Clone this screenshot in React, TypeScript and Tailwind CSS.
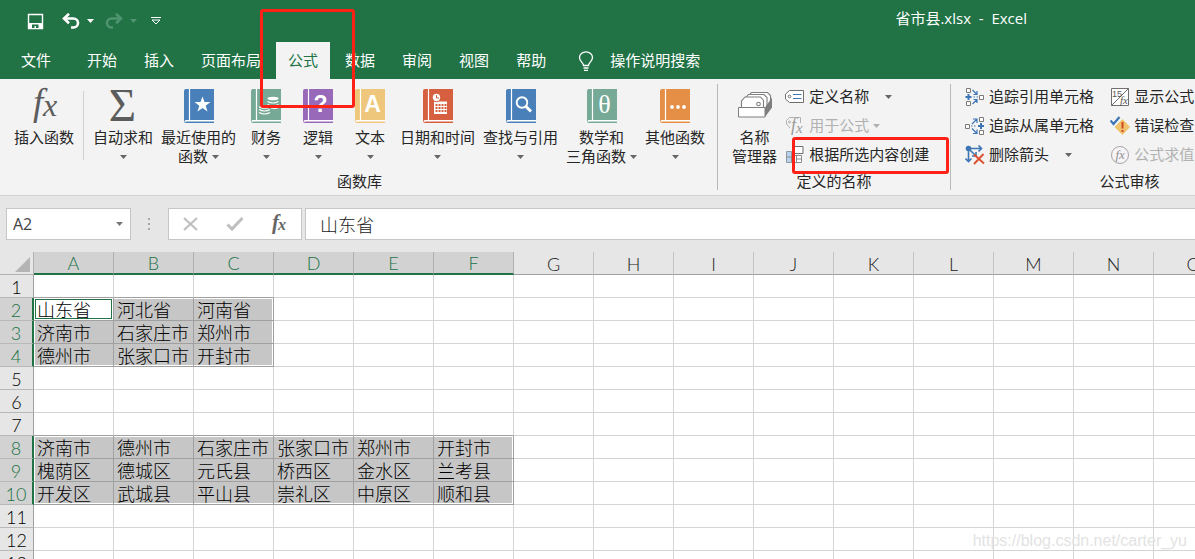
import { useState, type ReactNode } from 'react';
import clsx from 'clsx';

const COLUMNS = ['A', 'B', 'C', 'D', 'E', 'F', 'G', 'H', 'I', 'J', 'K', 'L', 'M', 'N', 'O'];
const ROW_COUNT = 13;

const SHEET: Record<number, string[]> = {
  2: ['山东省', '河北省', '河南省'],
  3: ['济南市', '石家庄市', '郑州市'],
  4: ['德州市', '张家口市', '开封市'],
  8: ['济南市', '德州市', '石家庄市', '张家口市', '郑州市', '开封市'],
  9: ['槐荫区', '德城区', '元氏县', '桥西区', '金水区', '兰考县'],
  10: ['开发区', '武城县', '平山县', '崇礼区', '中原区', '顺和县'],
};

interface Range {
  top: number;
  bottom: number;
  right: number;
}

// Both ranges start in column A
const SELECTION: Range[] = [
  { top: 2, bottom: 4, right: 2 },
  { top: 8, bottom: 10, right: 5 },
];

const TABS = ['开始', '插入', '页面布局', '公式', '数据', '审阅', '视图', '帮助'];

const rangeAt = (row: number, col: number) =>
  SELECTION.find((r) => row >= r.top && row <= r.bottom && col <= r.right);

const isRowSelected = (row: number) => SELECTION.some((r) => row >= r.top && row <= r.bottom);

function Caret({ className }: { className?: string }) {
  return (
    <svg width="7" height="4" viewBox="0 0 7 4" className={clsx('inline-block shrink-0', className)} aria-hidden="true">
      <path d="M0 0h7L3.5 4z" fill="currentColor" />
    </svg>
  );
}

function Book({ color, children }: { color: string; children: ReactNode }) {
  return (
    <svg width="30" height="34" viewBox="0 0 30 34" aria-hidden="true">
      <path d="M2 0H30V34H2Q0 34 0 32V2Q0 0 2 0z" fill={color} />
      <path d="M5.5 0V31" stroke="#fff" strokeWidth="1.2" />
      <path d="M30 31.8H2.5Q1.5 31.8 1 32.6" stroke="#fff" strokeWidth="1.6" fill="none" />
      {children}
    </svg>
  );
}

function StarBook() {
  return (
    <Book color="#4a80b9">
      <path d="M18.5 7.5l2 5.6h6l-4.8 3.6 1.8 5.8-5-3.5-5 3.5 1.8-5.8-4.8-3.6h6z" fill="#fff" />
    </Book>
  );
}

function CoinsBook() {
  return (
    <Book color="#77a997">
      <g fill="#fff">
        <ellipse cx="22" cy="9.5" rx="5.5" ry="1.8" />
        <ellipse cx="13.5" cy="18" rx="5.5" ry="1.8" />
      </g>
      <g fill="none" stroke="#fff" strokeWidth="1.2">
        <path d="M16.5 12.5q5.5 3 11 0M16.5 15.5q5.5 3 11 0M20 19q4.5 1 7.5-.5" />
        <path d="M8 20.5q5.5 3 11 0M8 23.5q5.5 3 11 0" />
      </g>
    </Book>
  );
}

function LetterBook({ color, letter, serif }: { color: string; letter: string; serif?: boolean }) {
  return (
    <Book color={color}>
      <text
        x="17.5"
        y={serif ? 24 : 23}
        textAnchor="middle"
        fill="#fff"
        fontSize={serif ? 26 : 23}
        fontWeight={serif ? 400 : 700}
        fontFamily={serif ? 'Liberation Serif, serif' : 'Liberation Sans, sans-serif'}
      >
        {letter}
      </text>
    </Book>
  );
}

function CalendarBook() {
  return (
    <Book color="#d65f40">
      <path d="M11 12.5h13V25H11z" fill="#fff" />
      <g fill="#d65f40">
        {[15, 18, 21].map((y) =>
          [12.5, 15.5, 18.5, 21.5].map((x) => <rect key={`${x}-${y}`} x={x} y={y} width="2" height="2" />),
        )}
      </g>
      <circle cx="13.5" cy="8.5" r="4.2" fill="#fff" stroke="#d65f40" strokeWidth="1" />
      <path d="M13.5 6v3h2.5" stroke="#d65f40" fill="none" />
    </Book>
  );
}

function SearchBook() {
  return (
    <Book color="#4a80b9">
      <circle cx="16" cy="13.5" r="5.3" fill="none" stroke="#fff" strokeWidth="1.9" />
      <path d="M19.5 17l5.5 5.5" stroke="#fff" strokeWidth="3" />
    </Book>
  );
}

function DotsBook() {
  return (
    <Book color="#e58e45">
      <g fill="#fff">
        <circle cx="12" cy="18" r="1.9" />
        <circle cx="18" cy="18" r="1.9" />
        <circle cx="24" cy="18" r="1.9" />
      </g>
    </Book>
  );
}

function FxIcon() {
  return (
    <svg
      width="30"
      height="34"
      viewBox="0 0 30 34"
      fill="#5c5c5c"
      fontStyle="italic"
      fontFamily="Liberation Serif, serif"
      className="overflow-visible"
      aria-hidden="true"
    >
      <text x="4" y="26" fontSize="37">
        f
      </text>
      <text x="14" y="27" fontSize="32">
        x
      </text>
    </svg>
  );
}

function SigmaIcon() {
  return (
    <svg width="30" height="34" viewBox="0 0 30 34" className="overflow-visible" aria-hidden="true">
      <text
        x="14.5"
        y="32"
        textAnchor="middle"
        fill="#5c5c5c"
        fontSize="47"
        fontFamily="Liberation Serif, serif"
      >
        Σ
      </text>
    </svg>
  );
}

function NameManagerIcon() {
  return (
    <svg width="34" height="34" viewBox="0 0 34 34" aria-hidden="true">
      <g fill="#fff" stroke="#7f7f7f" strokeWidth="1.1">
        <path d="M10.5 17V7l3-3.5h16l3 3v13" />
        <path d="M7.5 18V9l3-3.5H26l3 3V19" />
        <path d="M3.5 19v-7L7 8h15.5l3 3.5V19" />
        <circle cx="20.5" cy="15" r="1.8" />
      </g>
      <path d="M27 18.5L34 8.5V18.5L27 28z" fill="#7f7f7f" />
      <path d="M.5 18.5H27V28H.5z" fill="#fff" stroke="#7f7f7f" />
    </svg>
  );
}

function TagIcon() {
  return (
    <svg width="20" height="20" viewBox="0 0 20 20" aria-hidden="true">
      <path d="M4.5 3.5h14v12h-14L.5 12V7z" fill="#fff" stroke="#6f6f6f" />
      <circle cx="4.5" cy="9.5" r="1.3" fill="none" stroke="#6f6f6f" />
      <path d="M8 7.5h8.5M8 11.5h8.5" stroke="#3e75b5" strokeWidth="1.2" />
    </svg>
  );
}

function UseInFormulaIcon() {
  return (
    <svg
      width="20"
      height="20"
      viewBox="0 0 20 20"
      fontStyle="italic"
      fontFamily="Liberation Serif, serif"
      fill="#9b9b9b"
      className="overflow-visible"
      aria-hidden="true"
    >
      <path d="M5 12L1.5 8V4.5l3-3h11V7" fill="none" stroke="#b1b1b1" />
      <circle cx="4.5" cy="6" r="1" fill="none" stroke="#b1b1b1" />
      <text x="6" y="15" fontSize="18">
        f
      </text>
      <text x="11" y="17" fontSize="15">
        x
      </text>
    </svg>
  );
}

function CreateFromSelectionIcon() {
  return (
    <svg width="20" height="20" viewBox="0 0 20 20" aria-hidden="true">
      <path d="M1.5 6.5h5v11h-5z" fill="#b9d2eb" stroke="#8f9aa5" />
      <path d="M6.5 10.5h10v7h-10zM11.5 11v6" fill="#fff" stroke="#8c8c8c" />
      <path d="M1 12h5.5M11 14h5.5" stroke="#8c8c8c" />
      <path d="M9.5 1.5H18v7H9.5L7.5 6V3.5z" fill="#fff" stroke="#6f6f6f" />
    </svg>
  );
}

function TracePrecedentsIcon() {
  return (
    <svg width="20" height="20" viewBox="0 0 20 20" aria-hidden="true">
      <g fill="#fff" stroke="#7a7a7a">
        <path d="M1.5 1.5h4v4h-4zM1.5 14.5h4v4h-4zM14.5 8.5h4v4h-4z" />
      </g>
      <g stroke="#3e75b5" fill="none">
        <path d="M.5 10h6M3.5 7v6" strokeWidth="2" />
        <path d="M7.5 3l4 4M12 4v3.5H8.5M7.5 17l4-4M12 16v-3.5H8.5M8.5 10H10M11.5 10H13" strokeWidth="1.2" />
      </g>
    </svg>
  );
}

function TraceDependentsIcon() {
  return (
    <svg width="20" height="20" viewBox="0 0 20 20" aria-hidden="true">
      <g fill="#fff" stroke="#7a7a7a">
        <path d="M14.5 1.5h4v4h-4zM14.5 14.5h4v4h-4zM.5 8.5h4v4h-4z" />
      </g>
      <g stroke="#3e75b5" fill="none">
        <path d="M13 10h6M16 7v6" strokeWidth="2" />
        <path d="M7 8l4.5-4.5M8 3h4v4M7 12.5l4.5 4.5M8 17.500h4v-4M6 10h1.5M9 10h1.5" strokeWidth="1.2" />
      </g>
    </svg>
  );
}

function RemoveArrowsIcon() {
  return (
    <svg width="20" height="20" viewBox="0 0 20 20" aria-hidden="true">
      <circle cx="3.5" cy="3.5" r="2.8" fill="#3e75b5" />
      <g stroke="#3e75b5" fill="none" strokeWidth="1.6">
        <path d="M5 3.5h11M13.5.5l3 3-3 3M3.5 5v11M.5 13.5l3 3 3-3" />
        <path d="M5 5l6 6M11 7v4H7" />
      </g>
      <path d="M9 9.5l10 9M18.5 9L9 19" stroke="#dc5230" strokeWidth="1.9" />
    </svg>
  );
}

function ShowFormulasIcon() {
  return (
    <svg width="20" height="20" viewBox="0 0 20 20" aria-hidden="true">
      <path d="M1.5 1.5h17v17h-17z" fill="#fff" stroke="#6f6f6f" />
      <path d="M1.5 18.5l17-17" stroke="#6f6f6f" />
      <text x="2" y="9.5" fill="#555" fontSize="9" fontFamily="Liberation Sans, sans-serif">
        15
      </text>
      <text x="10" y="16.5" fill="#555" fontSize="11" fontStyle="italic" fontFamily="Liberation Serif, serif">
        fx
      </text>
    </svg>
  );
}

function ErrorCheckIcon() {
  return (
    <svg width="20" height="20" viewBox="0 0 20 20" aria-hidden="true">
      <path d="M12.5 3.5l7 7.5-7 7.5L5 11z" fill="#f0c36f" stroke="#f0c36f" strokeLinejoin="round" />
      <path d="M12.5 6v6.5M12.5 14v2" stroke="#d24a20" strokeWidth="2" />
      <path d="M.5 4.5L3.5 8l6-7" stroke="#3e75b5" strokeWidth="2.2" fill="none" />
    </svg>
  );
}

function EvaluateIcon() {
  return (
    <svg width="20" height="20" viewBox="0 0 20 20" aria-hidden="true">
      <circle cx="10" cy="10" r="8.5" fill="#f7f4f7" stroke="#a8a3a8" />
      <text x="5.5" y="14" fill="#8f8f8f" fontSize="13" fontStyle="italic" fontFamily="Liberation Serif, serif">
        fx
      </text>
    </svg>
  );
}

interface BigButtonProps {
  icon: ReactNode;
  lines: string[];
  // where the drop-down caret goes: under the label, after its last line, or nowhere
  caret?: 'below' | 'inline';
}

function BigButton({ icon, lines, caret }: BigButtonProps) {
  return (
    <button type="button" className="flex min-w-[52px] shrink-0 flex-col items-center px-1 leading-[19px] hover:bg-[#d2d2d2]">
      <span className="mb-[5px] flex h-[39px] items-end">{icon}</span>
      {lines.map((line, i) => (
        <span key={line} className="flex items-center gap-1 whitespace-nowrap">
          {line}
          {caret === 'inline' && i === lines.length - 1 && <Caret className="text-[#666]" />}
        </span>
      ))}
      {caret === 'below' && (
        <span className="flex h-[19px] items-center">
          <Caret className="text-[#666]" />
        </span>
      )}
    </button>
  );
}

interface SmallButtonProps {
  icon: ReactNode;
  label: string;
  disabled?: boolean;
  caret?: 'near' | 'far';
}

function SmallButton({ icon, label, disabled, caret }: SmallButtonProps) {
  return (
    <button
      type="button"
      disabled={disabled}
      className={clsx(
        'flex h-[29px] items-center pb-1 whitespace-nowrap',
        disabled ? 'text-[#b1b1b1]' : 'hover:bg-[#d2d2d2]',
      )}
    >
      <span className="mr-1">{icon}</span>
      {label}
      {caret && (
        <Caret className={clsx(caret === 'far' ? 'ml-4' : 'ml-1', disabled ? 'text-[#b1b1b1]' : 'text-[#666]')} />
      )}
    </button>
  );
}

interface RibbonGroupProps {
  label: string;
  className?: string;
  children: ReactNode;
}

function RibbonGroup({ label, className, children }: RibbonGroupProps) {
  return (
    <section aria-label={label} className={clsx('flex shrink-0 flex-col border-r border-[#b9b9b9]', className)}>
      <div className="flex h-[90px] items-start">{children}</div>
      <div className="text-center leading-[17px]">{label}</div>
    </section>
  );
}

function TitleBar() {
  return (
    <div className="flex h-[42px] items-center">
      <div className="flex h-[38px] flex-1 items-center pl-[27px]">
        <button type="button" aria-label="保存">
          <svg width="17" height="17" viewBox="0 0 17 17">
            <path d="M1.5 1.5h14v14h-14z" fill="none" stroke="#fff" strokeWidth="1.4" />
            <path d="M1 10h15v6H1z" fill="#fff" />
            <path d="M5 11.5h6.5V15H9v-2H7.500v2H5z" fill="#217346" />
          </svg>
        </button>
        <button type="button" aria-label="撤消" className="ml-[18px] flex items-center gap-[7px] text-white">
          <svg width="18" height="16" viewBox="0 0 18 16" fill="none" stroke="currentColor">
            <path d="M2 5.5h9.5a4.5 4.5 0 0 1 0 9H9" strokeWidth="2.6" />
            <path d="M7 .8L2 5.5l5 4.7" strokeWidth="2.6" />
          </svg>
          <Caret />
        </button>
        <button type="button" aria-label="恢复" disabled className="ml-[11px] flex items-center gap-[7px] text-[#4f9470]">
          <svg width="18" height="16" viewBox="0 0 18 16" fill="none" stroke="currentColor">
            <path d="M16 5.5H6.5a4.5 4.5 0 0 0 0 9H8" strokeWidth="2.6" />
            <path d="M11 .8l5 4.7-5 4.7" strokeWidth="2.6" />
          </svg>
          <Caret />
        </button>
        <button type="button" aria-label="自定义快速访问工具栏" className="ml-[14px]">
          <svg width="10" height="8" viewBox="0 0 10 8" fill="none" stroke="#fff">
            <path d="M0 .5h10M1 3h8L5 7z" />
          </svg>
        </button>
      </div>
      <h1 className="mr-[168px] h-[28px] whitespace-pre text-[15px] text-white">省市县.xlsx  -  Excel</h1>
    </div>
  );
}

function TabBar({ active, onSelect }: { active: string; onSelect: (tab: string) => void }) {
  return (
    <nav className="flex h-[37px] items-stretch pl-[9px] text-white">
      <button type="button" className="mr-3 px-3">
        文件
      </button>
      <div className="flex gap-[3px]">
        {TABS.map((tab) => (
          <button
            key={tab}
            type="button"
            onClick={() => onSelect(tab)}
            className={clsx('px-3 whitespace-nowrap', tab === active && 'bg-[#f3f3f3] text-[#217346]')}
          >
            {tab}
          </button>
        ))}
      </div>
      <button type="button" className="ml-5 flex items-center gap-4 whitespace-nowrap">
        <svg width="16" height="20" viewBox="0 0 16 20" fill="none" stroke="#fff" strokeWidth="1.3">
          <path d="M5.5 14.5c0-3-4-4-4-8a6.5 5.7 0 0 1 13 0c0 4-4 5-4 8z" />
          <path d="M5.5 17h5M6 19.3h4" />
        </svg>
        操作说明搜索
      </button>
    </nav>
  );
}

function Ribbon() {
  return (
    <div className="flex h-[117px] overflow-hidden border-b border-[#d2d2d2] bg-[#f3f3f3] pt-[5px] pb-[5px] text-[#262626]">
      <RibbonGroup label="函数库" className="pr-2 pl-[10px]">
        <BigButton icon={<FxIcon />} lines={['插入函数']} />
        <div className="mx-[5px] mt-[7px] h-[69px] w-px bg-[#d0d0d0]" />
        <BigButton icon={<SigmaIcon />} lines={['自动求和']} caret="below" />
        <BigButton icon={<StarBook />} lines={['最近使用的', '函数']} caret="inline" />
        <BigButton icon={<CoinsBook />} lines={['财务']} caret="below" />
        <BigButton icon={<LetterBook color="#9868b9" letter="?" />} lines={['逻辑']} caret="below" />
        <BigButton icon={<LetterBook color="#eec77c" letter="A" />} lines={['文本']} caret="below" />
        <BigButton icon={<CalendarBook />} lines={['日期和时间']} caret="below" />
        <BigButton icon={<SearchBook />} lines={['查找与引用']} caret="below" />
        <BigButton icon={<LetterBook color="#77a997" letter="θ" serif />} lines={['数学和', '三角函数']} caret="inline" />
        <BigButton icon={<DotsBook />} lines={['其他函数']} caret="below" />
      </RibbonGroup>
      <RibbonGroup label="定义的名称" className="w-[233px]">
        <div className="ml-[10px]">
          <BigButton icon={<NameManagerIcon />} lines={['名称', '管理器']} />
        </div>
        <div className="ml-1">
          <SmallButton icon={<TagIcon />} label="定义名称" caret="far" />
          <SmallButton icon={<UseInFormulaIcon />} label="用于公式" caret="near" disabled />
          <SmallButton icon={<CreateFromSelectionIcon />} label="根据所选内容创建" />
        </div>
      </RibbonGroup>
      <RibbonGroup label="公式审核" className="w-[358px]">
        <div className="ml-[14px]">
          <SmallButton icon={<TracePrecedentsIcon />} label="追踪引用单元格" />
          <SmallButton icon={<TraceDependentsIcon />} label="追踪从属单元格" />
          <SmallButton icon={<RemoveArrowsIcon />} label="删除箭头" caret="far" />
        </div>
        <div className="ml-4">
          <SmallButton icon={<ShowFormulasIcon />} label="显示公式" />
          <SmallButton icon={<ErrorCheckIcon />} label="错误检查" />
          <SmallButton icon={<EvaluateIcon />} label="公式求值" disabled />
        </div>
      </RibbonGroup>
    </div>
  );
}

function FormulaBar() {
  return (
    <div className="flex h-[56px] items-center bg-[#e6e6e6] pl-[6px]">
      <div className="flex h-[32px] w-[125px] items-center border border-[#c6c6c6] bg-white pr-[7px]">
        <input
          aria-label="名称框"
          defaultValue="A2"
          className="w-full min-w-0 bg-transparent pl-[6px] text-base text-[#444] outline-none"
        />
        <button type="button" aria-label="选择名称" className="flex">
          <Caret className="text-[#777]" />
        </button>
      </div>
      <svg width="3" height="14" viewBox="0 0 3 14" fill="#a6a6a6" className="mx-[17px]" aria-hidden="true">
        <path d="M0 1h2v2H0zM0 6h2v2H0zM0 11h2v2H0z" />
      </svg>
      <div className="flex h-[32px] w-[134px] items-center justify-between border border-[#c6c6c6] bg-white px-[13px]">
        <button type="button" aria-label="取消">
          <svg width="17" height="16" viewBox="0 0 17 16" fill="none" stroke="#bfbfbf" strokeWidth="2.2">
            <path d="M2 2l13 12M15 2L2 14" />
          </svg>
        </button>
        <button type="button" aria-label="输入">
          <svg width="18" height="16" viewBox="0 0 18 16" fill="none" stroke="#bfbfbf" strokeWidth="3">
            <path d="M1.5 8.5L6 13 16.5 2" />
          </svg>
        </button>
        <button type="button" aria-label="插入函数">
          <svg
            width="18"
            height="22"
            viewBox="0 0 18 22"
            fill="#666"
            fontFamily="Liberation Serif, serif"
            fontStyle="italic"
            fontWeight="700"
            className="overflow-visible"
          >
            <text x="2" y="16" fontSize="21">
              f
            </text>
            <text x="8" y="17" fontSize="16">
              x
            </text>
          </svg>
        </button>
      </div>
      <input
        aria-label="编辑栏"
        defaultValue="山东省"
        className="ml-[3px] h-[32px] min-w-0 flex-1 border border-r-0 border-[#c6c6c6] bg-white px-[14px] font-['Lato','Noto_Sans_CJK_SC',sans-serif] text-[18px] font-light text-[#222] outline-none"
      />
    </div>
  );
}

function Cell({ row, col }: { row: number; col: number }) {
  const range = rangeAt(row, col);
  const below = rangeAt(row + 1, col);
  const isActive = row === 2 && col === 0;

  return (
    <td
      className={clsx(
        'relative h-[23px] border-r border-b p-0 pt-px pl-[3px] text-left whitespace-nowrap',
        range ? 'border-[#a0a0a0]' : 'border-[#d4d4d4]',
        !range && below && 'border-b-[#a0a0a0]',
        range && !isActive && 'bg-[#c6c6c6]',
        isActive && 'shadow-[inset_0_0_0_1px_#fff,inset_0_0_0_2px_#217346]',
      )}
    >
      {SHEET[row]?.[col]}
      {/* white hairline just inside the outline of the selected range */}
      {range && !isActive && (
        <span
          className={clsx(
            'pointer-events-none absolute inset-0 border-white',
            row === range.top && 'border-t',
            row === range.bottom && 'border-b',
            col === 0 && 'border-l',
            col === range.right && 'border-r',
          )}
        />
      )}
    </td>
  );
}

function Sheet() {
  return (
    <div className="min-h-0 flex-1 overflow-hidden bg-white font-['Lato','Noto_Sans_CJK_SC',sans-serif] font-light">
      <table className="w-max table-fixed border-separate border-spacing-0 text-[18px] leading-[20px] text-black">
        <colgroup>
          <col className="w-[34px]" />
          {COLUMNS.map((name) => (
            <col key={name} className="w-[80px]" />
          ))}
        </colgroup>
        <thead>
          <tr>
            <th className="h-[23px] w-[34px] border-r border-b border-[#b0b0b0] bg-[#e6e6e6] p-0">
              <svg width="15" height="15" viewBox="0 0 15 15" className="mt-[2px] ml-[15px]" aria-hidden="true">
                <path d="M15 0v15H0z" fill="#b4b4b4" />
              </svg>
            </th>
            {COLUMNS.map((name, i) => (
              <th
                key={name}
                scope="col"
                className={clsx(
                  'h-[23px] w-[80px] border-r p-0 pt-px font-light',
                  i < 6
                    ? 'border-b-2 border-r-[#b0b0b0] border-b-[#217346] bg-[#d2d2d2] text-[#217346]'
                    : 'border-b border-r-[#c3c3c3] border-b-[#a0a0a0] bg-[#e6e6e6] text-[#222]',
                )}
              >
                {name}
              </th>
            ))}
          </tr>
        </thead>
        <tbody>
          {Array.from({ length: ROW_COUNT }, (_, i) => i + 1).map((row) => (
            <tr key={row}>
              <th
                scope="row"
                className={clsx(
                  'h-[23px] border-b border-b-[#b8b8b8] p-0 pt-px font-light',
                  isRowSelected(row)
                    ? 'border-r-2 border-r-[#217346] bg-[#d2d2d2] text-[#217346]'
                    : 'border-r border-r-[#a0a0a0] bg-[#e6e6e6] text-black',
                )}
              >
                {row}
              </th>
              {COLUMNS.map((name, col) => (
                <Cell key={name} row={row} col={col} />
              ))}
            </tr>
          ))}
        </tbody>
      </table>
    </div>
  );
}

export default function App() {
  const [tab, setTab] = useState('公式');

  return (
    <div className="relative flex h-screen flex-col overflow-hidden font-['Open_Sans','Noto_Sans_CJK_SC',sans-serif] text-[15px]">
      <header className="bg-[#217346]">
        <TitleBar />
        <TabBar active={tab} onSelect={setTab} />
      </header>
      <Ribbon />
      <FormulaBar />
      <Sheet />

      {/* Tutorial marks over the window */}
      <div className="pointer-events-none absolute top-[9px] left-[260px] h-[99px] w-[95px] rounded-[3px] border-3 border-[#ff2116]" />
      <div className="pointer-events-none absolute top-[137px] left-[792px] h-[37px] w-[157px] rounded-[3px] border-3 border-[#ff2116]" />
      <div className="pointer-events-none absolute right-2 bottom-2 font-['Liberation_Sans',sans-serif] text-base leading-5 text-[#e3e3e3]">
        https://blog.csdn.net/carter_yu
      </div>
    </div>
  );
}
